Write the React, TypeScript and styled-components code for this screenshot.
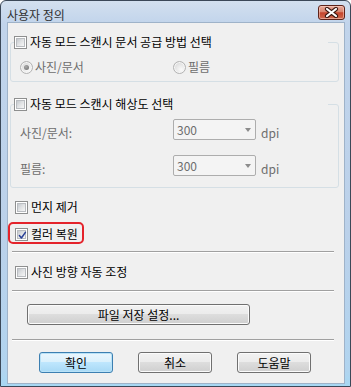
import React from 'react';
import styled, { createGlobalStyle } from 'styled-components';

const GlobalStyle = createGlobalStyle`
  * {
    box-sizing: border-box;
  }
  html,
  body {
    background: #ffffff;
    margin: 0;
    padding: 0;
  }
  body {
    font-family: 'Noto Sans CJK KR', 'Noto Sans', sans-serif;
    font-size: 12px;
  }
`;

const Window = styled.div`
  background: linear-gradient(
    to bottom,
    #d3e0ef 0,
    #c1d4eb 6%,
    #bbd1ea 60%,
    #b1d4ef 96%,
    #a7d8f3 100%
  );
  border: 1px solid #3b4858;
  border-radius: 6px 6px 0 0;
  display: flex;
  flex-direction: column;
  height: 387px;
  width: 351px;
`;

const TitleBar = styled.div`
  align-items: flex-start;
  display: flex;
  flex: none;
  height: 21px;
  justify-content: space-between;
  padding: 0 5px 0 6px;
`;

const TitleText = styled.span`
  color: #2f2f2f;
  font-size: 12px;
  line-height: 13px;
  padding-top: 7px;
`;

const CloseButton = styled.div`
  align-items: center;
  background: linear-gradient(
    to bottom,
    #e9aa9a 0,
    #d98670 45%,
    #c5442c 52%,
    #cf6a4f 100%
  );
  border: 1px solid #5e2319;
  border-radius: 3px;
  box-shadow: inset 0 0 0 1px rgba(255, 220, 210, 0.5);
  display: flex;
  height: 15px;
  justify-content: center;
  margin-top: 4px;
  width: 27px;
`;

const Client = styled.div`
  align-items: flex-start;
  background: #f0f0f0;
  border: 1px solid #9fb3c9;
  display: flex;
  flex: 1;
  flex-direction: column;
  margin: 0 5px 2px 6px;
  padding-bottom: 10px;
`;

const Group = styled.fieldset<{ $top: number }>`
  border: 1px solid #d5dfe5;
  border-radius: 3px;
  margin: ${({ $top }) => $top}px 0 0 2px;
  min-width: 0;
  padding: 0;
  width: 329px;
`;

const GroupLegend = styled.legend`
  display: block;
  height: 14px;
  margin-left: 3px;
  padding: 0;
  width: 314px;
`;

const GroupBody = styled.div<{ $pad: string }>`
  display: flex;
  flex-direction: column;
  gap: 15px;
  padding: ${({ $pad }) => $pad};
`;

const CheckRow = styled.label<{ $left?: number; $top?: number }>`
  align-items: center;
  display: flex;
  gap: 3px;
  height: 14px;
  margin-left: ${({ $left }) => $left ?? 0}px;
  margin-top: ${({ $top }) => $top ?? 0}px;
`;

const LabelText = styled.span<{ $disabled?: boolean }>`
  color: ${({ $disabled }) => ($disabled ? '#6d6d6d' : '#000000')};
  font-size: 12px;
  line-height: 14px;
  white-space: nowrap;
`;

const UnitText = styled(LabelText)`
  padding-left: 5px;
`;

const Box = styled.span`
  background: #ffffff;
  border: 1px solid #8e8f8f;
  display: flex;
  flex: none;
  height: 13px;
  padding: 1px;
  position: relative;
  width: 13px;
`;

const BoxFill = styled.span`
  background: linear-gradient(135deg, #c4c8cd 0, #dfe1e3 45%, #f6f6f6 100%);
  border: 1px solid #b9bcc0;
  flex: 1;
`;

const CheckMark = styled.svg`
  left: 0;
  position: absolute;
  top: 0;
`;

const RadioRow = styled.div`
  display: grid;
  grid-template-columns: 153px auto;
  height: 13px;
`;

const RadioItem = styled.div`
  align-items: center;
  display: flex;
  gap: 2px;
`;

const RadioCircle = styled.span`
  align-items: center;
  background: radial-gradient(circle at 65% 70%, #fafafa 0, #e4e4e4 55%, #cfcfcf 100%);
  border: 1px solid #b3b3b3;
  border-radius: 50%;
  box-shadow: inset 0 0 0 1px #f6f6f6;
  display: flex;
  flex: none;
  height: 13px;
  justify-content: center;
  width: 13px;
`;

const RadioDot = styled.span`
  background: radial-gradient(circle at 40% 35%, #a9a9a9 0, #6e6e6e 100%);
  border-radius: 50%;
  height: 5px;
  width: 5px;
`;

const SettingRow = styled.div`
  align-items: end;
  display: grid;
  grid-template-columns: 153px 83px auto;
  height: 21px;
`;

const Combo = styled.div`
  align-items: center;
  background: #f4f4f4;
  border: 1px solid #adadad;
  border-radius: 2px;
  color: #6d6d6d;
  display: flex;
  height: 21px;
  justify-content: space-between;
  padding: 0 4px 0 3px;
`;

const ComboArrow = styled.span`
  border-left: 3.5px solid transparent;
  border-right: 3.5px solid transparent;
  border-top: 4px solid #8c8c8c;
  height: 0;
  margin-top: 1px;
  width: 0;
`;

const Highlight = styled.div`
  border: 2px solid #e4232b;
  border-radius: 5px;
  height: 22px;
  margin-top: 8px;
  padding: 3px 0 1px 5px;
  width: 76px;
`;

const Separator = styled.div<{ $top: number }>`
  background: #a0a0a0;
  border-bottom: 1px solid #ffffff;
  height: 2px;
  margin: ${({ $top }) => $top}px 0 0 4px;
  width: 322px;
`;

const PushButton = styled.button<{ $primary?: boolean; $width: number }>`
  background: ${({ $primary }) =>
    $primary
      ? 'linear-gradient(to bottom, #eaf6fd 0, #d9f0fc 50%, #bee6fd 50%, #a7d9f5 100%)'
      : 'linear-gradient(to bottom, #f2f2f2 0, #ebebeb 50%, #dddddd 50%, #cfcfcf 100%)'};
  border: 1px solid ${({ $primary }) => ($primary ? '#3c7fb1' : '#707070')};
  border-radius: 3px;
  box-shadow: inset 0 0 0 1px
    ${({ $primary }) => ($primary ? '#b9e2f7' : '#fbfbfb')};
  color: #000000;
  font-family: inherit;
  font-size: 12px;
  height: 21px;
  line-height: 14px;
  padding: 0;
  width: ${({ $width }) => $width}px;
`;

const FileButton = styled(PushButton)`
  margin: 12px 0 0 19px;
`;

const ButtonRow = styled.div`
  display: flex;
  gap: 25px;
  margin: 11px 0 0 31px;
`;

const CheckBox: React.FC<{ checked?: boolean }> = ({ checked }) => (
  <Box>
    <BoxFill />
    {checked && (
      <CheckMark width="13" height="13" viewBox="0 0 13 13">
        <path
          d="M3.4 6.6 L5.4 9 L9.4 3.4"
          fill="none"
          stroke="#2a4096"
          strokeWidth="1.5"
          strokeLinecap="round"
          strokeLinejoin="round"
        />
      </CheckMark>
    )}
  </Box>
);

const Radio: React.FC<{ label: string; selected?: boolean }> = ({
  label,
  selected,
}) => (
  <RadioItem>
    <RadioCircle>{selected && <RadioDot />}</RadioCircle>
    <LabelText $disabled>{label}</LabelText>
  </RadioItem>
);

const ResolutionRow: React.FC<{ label: string; value: string }> = ({
  label,
  value,
}) => (
  <SettingRow>
    <LabelText $disabled>{label}</LabelText>
    <Combo>
      <LabelText $disabled>{value}</LabelText>
      <ComboArrow />
    </Combo>
    <UnitText $disabled>dpi</UnitText>
  </SettingRow>
);

const App: React.FC = () => (
  <>
    <GlobalStyle />
    <Window>
      <TitleBar>
        <TitleText>사용자 정의</TitleText>
        <CloseButton>
          <svg width="15" height="11" viewBox="0 0 15 11">
            <path
              d="M3 2 L12 9 M12 2 L3 9"
              stroke="#3a1710"
              strokeWidth="4.2"
              strokeLinecap="round"
            />
            <path
              d="M3 2 L12 9 M12 2 L3 9"
              stroke="#ffffff"
              strokeWidth="2.2"
              strokeLinecap="round"
            />
          </svg>
        </CloseButton>
      </TitleBar>
      <Client>
        <Group $top={12}>
          <GroupLegend>
            <CheckRow>
              <CheckBox />
              <LabelText>자동 모드 스캔시 문서 공급 방법 선택</LabelText>
            </CheckRow>
          </GroupLegend>
          <GroupBody $pad="11px 0 8px 9px">
            <RadioRow>
              <Radio label="사진/문서" selected />
              <Radio label="필름" />
            </RadioRow>
          </GroupBody>
        </Group>

        <Group $top={15}>
          <GroupLegend>
            <CheckRow>
              <CheckBox />
              <LabelText>자동 모드 스캔시 해상도 선택</LabelText>
            </CheckRow>
          </GroupLegend>
          <GroupBody $pad="8px 0 11px 9px">
            <ResolutionRow label="사진/문서:" value="300" />
            <ResolutionRow label="필름:" value="300" />
          </GroupBody>
        </Group>

        <CheckRow $left={7} $top={12}>
          <CheckBox />
          <LabelText>먼지 제거</LabelText>
        </CheckRow>

        <Highlight>
          <CheckRow>
            <CheckBox checked />
            <LabelText>컬러 복원</LabelText>
          </CheckRow>
        </Highlight>

        <Separator $top={7} />

        <CheckRow $left={7} $top={12}>
          <CheckBox />
          <LabelText>사진 방향 자동 조정</LabelText>
        </CheckRow>

        <Separator $top={11} />

        <FileButton $width={223}>파일 저장 설정...</FileButton>

        <Separator $top={14} />

        <ButtonRow>
          <PushButton $primary $width={74}>
            확인
          </PushButton>
          <PushButton $width={74}>취소</PushButton>
          <PushButton $width={74}>도움말</PushButton>
        </ButtonRow>
      </Client>
    </Window>
  </>
);

export default App;
